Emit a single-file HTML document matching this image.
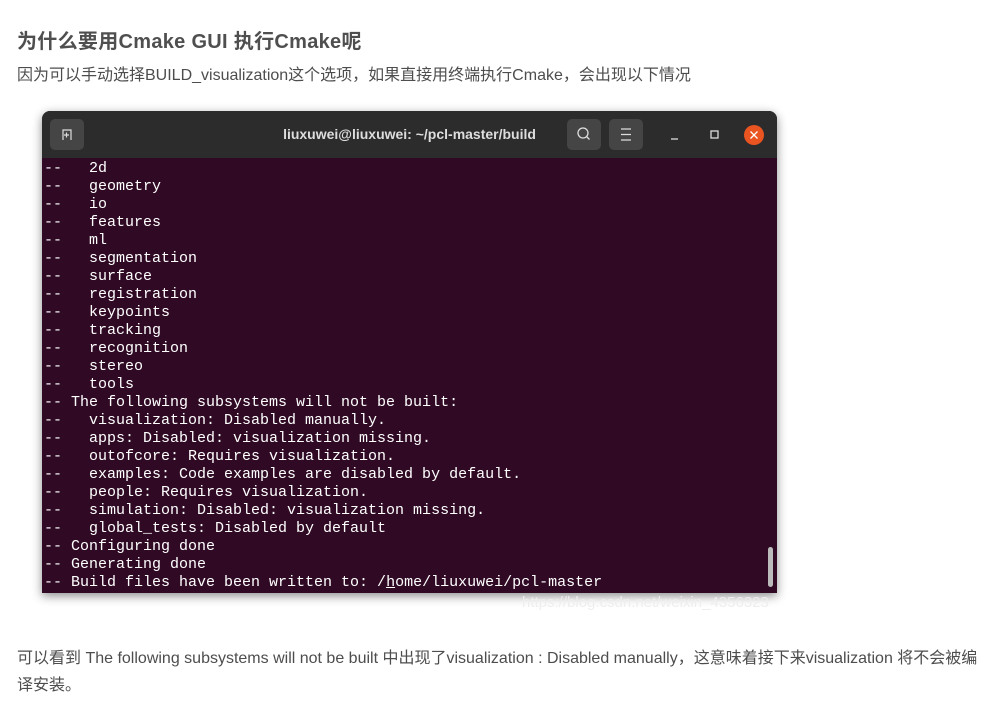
<!DOCTYPE html>
<html><head><meta charset="utf-8"><style>
body{margin:0;background:#fff;font-family:"Liberation Sans","Noto Sans CJK SC",sans-serif;color:#4d4d4d;width:991px;height:703px;overflow:hidden;position:relative}
h2{position:absolute;left:17px;top:28px;margin:0;font-size:20px;font-weight:bold;color:#4f4f4f;line-height:28px;letter-spacing:0.3px}
.p{position:absolute;left:17px;font-size:16px;line-height:28px;margin:0;white-space:nowrap}
.term{position:absolute;left:42px;top:111px;width:735px;height:482px;background:#300a24;border-radius:8px 8px 0 0;box-shadow:0 3px 10px rgba(0,0,0,.45);overflow:hidden}
.tb{height:47px;background:#2c2c2c;position:relative;color:#eee}
.btn{position:absolute;top:8px;width:34px;height:31px;background:#454545;border-radius:5px}
.title{position:absolute;left:0;right:0;top:15px;text-align:center;font-weight:bold;font-size:14px;color:#ddd}
pre{margin:0;padding:2px 0 0 2px;font-family:"Liberation Mono","DejaVu Sans Mono",monospace;font-size:15px;line-height:18px;color:#fff}
.sb{position:absolute;right:4px;bottom:6px;width:5px;height:40px;background:#bbb;border-radius:3px}
.wm{position:absolute;left:522px;top:594px;font-size:15px;color:#eee}
</style></head><body>
<h2>为什么要用Cmake GUI 执行Cmake呢</h2>
<p class="p" style="top:62px">因为可以手动选择BUILD_visualization这个选项，如果直接用终端执行Cmake，会出现以下情况</p>
<div class="term">
<div class="tb">
<div class="btn" style="left:8px"><svg width="34" height="31"><path d="M13 21V11h8v10M14 16h5M16.5 13.5v5" stroke="#ddd" fill="none" stroke-width="1.2"/></svg></div>
<div class="title">liuxuwei@liuxuwei: ~/pcl-master/build</div>
<div class="btn" style="left:525px"><svg width="34" height="31"><circle cx="16" cy="14" r="5" stroke="#ddd" fill="none" stroke-width="1.3"/><path d="M19.5 17.5l3 3" stroke="#ddd" stroke-width="1.3"/></svg></div>
<div class="btn" style="left:567px"><svg width="34" height="31"><path d="M12 10h10M12 15.5h10M12 21h10" stroke="#ddd" stroke-width="1.2"/></svg></div>
<svg style="position:absolute;left:620px;top:12px" width="110" height="24"><path d="M9 16h7" stroke="#ddd" stroke-width="1.3"/><rect x="49" y="8" width="7" height="7" stroke="#ddd" fill="none" stroke-width="1.3"/><circle cx="92" cy="12" r="10" fill="#e95420"/><path d="M88.5 8.5l7 7M95.5 8.5l-7 7" stroke="#fff" stroke-width="1.3"/></svg>
</div>
<pre>--   2d
--   geometry
--   io
--   features
--   ml
--   segmentation
--   surface
--   registration
--   keypoints
--   tracking
--   recognition
--   stereo
--   tools
-- The following subsystems will not be built:
--   visualization: Disabled manually.
--   apps: Disabled: visualization missing.
--   outofcore: Requires visualization.
--   examples: Code examples are disabled by default.
--   people: Requires visualization.
--   simulation: Disabled: visualization missing.
--   global_tests: Disabled by default
-- Configuring done
-- Generating done
-- Build files have been written to: /<u>h</u>ome/liuxuwei/pcl-master</pre>
<div class="sb"></div>
</div>
<div class="wm">https://blog.csdn.net/weixin_4356323</div>
<p class="p" style="top:645px">可以看到 The following subsystems will not be built 中出现了visualization : Disabled manually，这意味着接下来visualization 将不会被编</p>
<p class="p" style="top:672px">译安装。</p>
</body></html>
